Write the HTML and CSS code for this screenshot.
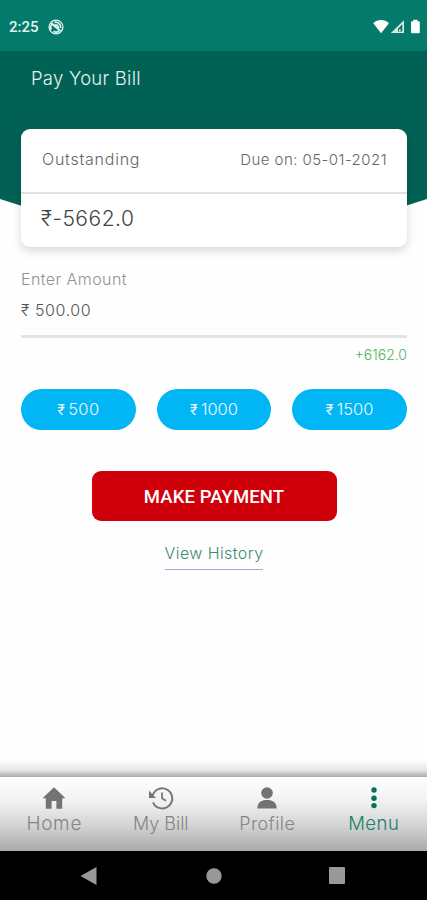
FILE: index.html
```html
<!DOCTYPE html>
<html lang="en">
<head>
<meta charset="utf-8">
<meta name="viewport" content="width=device-width, initial-scale=1">
<title>Pay Your Bill</title>
<link rel="stylesheet" href="styles.css">
</head>
<body>
<div class="screen">
  <div class="status">
    <span class="time">2:25</span>
    <svg class="dnd" width="16" height="16" viewBox="0 0 16 16" fill="none" stroke="#e3f3ef"><circle cx="8" cy="8" r="6.900" stroke-width="1.300"/><path d="M3.300 10.500A5 5 0 0 1 5 4M6.500 3.400A5 5 0 0 1 12.700 9M11 12A5 5 0 0 1 5.500 12.300" stroke-width="1.700"/><path d="M3.500 4.500L12.500 12M6 6.200H9L11 9" stroke-width="1.800"/></svg>
    <svg class="signals" width="48" height="16" viewBox="0 0 48 16" fill="#fff"><path d="M.3 4.300C4.500 0 11.500 0 15.900 4.300L8.100 14.200z"/><path d="M17.800 14H31V1.200z" fill="#d5e9e5"/><path d="M25 12.500h4.300V5.200l-4.300 4.600z" fill="#04705f"/><path d="M26 12h1.500V9.500L26 11z"/><path d="M38 3.200q0-1 1-1h1.300V.7h4.200v1.500h1.300q1 0 1 1V13q0 1.200-1 1.200H39q-1 0-1-1.200z"/></svg>
  </div>
  <header class="header"><h1>Pay Your Bill</h1></header>
  <main class="content">
    <section class="card">
      <div class="card-top"><span class="t-out">Outstanding</span><span class="t-due">Due on: 05-01-2021</span></div>
      <div class="card-balance"><span class="t-bal">₹-5662.0</span></div>
    </section>
    <section class="amount">
      <div class="label"><span class="t-label">Enter Amount</span></div>
      <div class="value"><span class="t-value">₹ 500.00</span></div>
      <div class="after"><span class="t-after">+6162.0</span></div>
    </section>
    <div class="presets">
      <button><span class="rupee">₹</span><span>500</span></button>
      <button><span class="rupee">₹</span><span class="four">1000</span></button>
      <button><span class="rupee">₹</span><span class="four">1500</span></button>
    </div>
    <button class="pay"><span class="t-pay">MAKE PAYMENT</span></button>
    <a class="history"><span class="t-hist">View History</span></a>
  </main>
  <div class="shade"></div>
  <nav class="tabs">
    <a class="tab"><svg width="24" height="24" viewBox="0 0 24 24" fill="#737373"><path d="M12 1.300L23.500 12.200H20.200V22.700H14.400V15H9.600V22.700H3.800V12.200H.5z"/></svg><span class="n-home">Home</span></a>
    <a class="tab"><svg width="26" height="24" viewBox="0 0 26 24" fill="none" stroke="#777" stroke-width="2"><path d="M4.500 10A10 10 0 1 1 5 16.300"/><path d="M14 6.500V12.300L18 14.800" stroke-width="1.800"/><path d="M1 4.500V12H8z" fill="#777" stroke="none"/></svg><span class="n-bill">My Bill</span></a>
    <a class="tab"><svg width="24" height="24" viewBox="0 0 24 24" fill="#737373"><circle cx="12" cy="7" r="5.800"/><path d="M2.300 22.500C2.300 16.500 6 13.900 12 13.900S21.700 16.500 21.700 22.500z"/></svg><span class="n-prof">Profile</span></a>
    <a class="tab active"><svg width="24" height="24" viewBox="0 0 24 24" fill="#04705a"><circle cx="12" cy="4" r="2.700"/><circle cx="12" cy="12.200" r="2.700"/><circle cx="12" cy="19.600" r="2.700"/></svg><span class="n-menu">Menu</span></a>
  </nav>
  <div class="system">
    <svg width="18" height="20" viewBox="0 0 18 20" fill="#999"><path d="M.5 10L16.500 1V19z"/></svg>
    <svg width="16" height="16" viewBox="0 0 16 16" fill="#999"><circle cx="8" cy="8" r="7.700"/></svg>
    <svg width="16" height="17" viewBox="0 0 16 17" fill="#999"><rect width="16" height="17" rx="1"/></svg>
  </div>
</div>
</body>
</html>
```
FILE: styles.css
```css
* { box-sizing: border-box; }
body { margin: 0; background: #fefefe; font-family: Inter, "Noto Sans", sans-serif; font-weight: 300; }
button { border: 0; padding: 0; font: inherit; color: inherit; }
svg { display: block; flex: none; }
span { white-space: nowrap; }
.screen { width: 427px; height: 900px; display: flex; flex-direction: column; overflow: hidden; }
.status { flex: none; height: 51px; padding: 2px 6px 0 9px; display: flex; align-items: center; background: #047a6b; color: #e3f3ef; }
.time { font: 500 15px Roboto, sans-serif; }
.dnd { margin-left: 9px; }
.signals { margin-left: auto; }
.header { flex: none; height: 185px; padding: 16px 0 0 31px; background: #026155; clip-path: path("M0 0H427V148Q213 220 0 148Z"); }
h1 { margin: 0; font-size: 18.5px; line-height: 22px; font-weight: 300; color: #e4f1ee; letter-spacing: .25px; }
.content { flex: 1; margin-top: -107px; padding: 0 20px 0 21px; display: flex; flex-direction: column; position: relative; }
.card { height: 118px; border-radius: 9px; background: #fff; box-shadow: 0 4px 10px rgba(0,0,0,.15); color: #666; }
.card-top { height: 65px; padding: 0 20px 3px 21px; border-bottom: 2px solid #e0e0e0; display: flex; justify-content: space-between; align-items: center; font-size: 15px; }
.t-out { font-size: 16px; letter-spacing: .75px; }
.t-due { letter-spacing: .45px; }
.card-balance { height: 50px; padding: 0 0 2px 20px; display: flex; align-items: center; font-size: 21px; color: #444; letter-spacing: .5px; }
.amount { margin-top: 22px; font-size: 16px; line-height: 20px; }
.label { color: #929292; letter-spacing: .42px; }
.value { height: 49px; padding-top: 11px; border-bottom: 3px solid #e3e3e3; color: #555; letter-spacing: .6px; }
.after { padding-top: 7px; text-align: right; color: #4fb353; font-size: 14px; }
.presets { margin-top: 24px; display: grid; grid-template-columns: repeat(3, 1fr); gap: 21px; }
.presets button { height: 41px; border-radius: 21px; background: #02b6f6; color: #e9f8ff; font-size: 16.5px; letter-spacing: .4px; display: flex; align-items: center; justify-content: center; gap: 3px; }
.presets span { margin-top: -1px; }
.rupee { font-size: 14px; font-weight: 400; padding-top: 1px; }
.presets .four { letter-spacing: 0; }
.pay { align-self: center; width: 245px; height: 50px; margin-top: 41px; padding-top: 1px; border-radius: 9px; background: #cf000a; color: #fff; font: 500 18.5px Roboto, sans-serif; letter-spacing: .1px; }
.history { align-self: center; margin-top: 21px; height: 28px; border-bottom: 1px solid #aaa5d6; color: #3b8a74; font-size: 16px; line-height: 23px; letter-spacing: .42px; }
.shade { flex: none; height: 17px; background: linear-gradient(#fefefe, #e5e5e5 60%, #aaa); }
.tabs { flex: none; height: 74px; padding: 9px 0 0 1px; display: grid; grid-template-columns: repeat(4, 1fr); background: linear-gradient(#fff, #f0f0f0 35%, #d4d4d4 65%, #aaa); color: #858585; font-size: 18px; line-height: 24px; }
.tab { display: flex; flex-direction: column; align-items: center; gap: 2px; }
.n-home { font-size: 19px; letter-spacing: .7px; }
.n-prof { letter-spacing: .4px; }
.n-menu { margin-top: -1px; font-size: 18.5px; letter-spacing: .5px; }
.active { color: #168066; }
.system { flex: none; height: 49px; display: grid; grid-template-columns: 178px 72px 174px; align-items: center; justify-items: center; background: #000; }
```
